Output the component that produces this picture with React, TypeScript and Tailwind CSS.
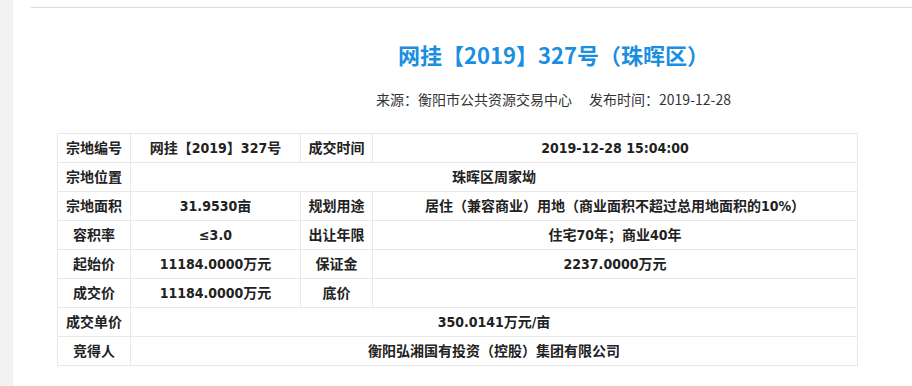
const rows: { cells: { text: string; span?: number }[] }[] = [
  { cells: [{ text: '宗地编号' }, { text: '网挂【2019】327号' }, { text: '成交时间' }, { text: '2019-12-28 15:04:00' }] },
  { cells: [{ text: '宗地位置' }, { text: '珠晖区周家坳', span: 3 }] },
  { cells: [{ text: '宗地面积' }, { text: '31.9530亩' }, { text: '规划用途' }, { text: '居住（兼容商业）用地（商业面积不超过总用地面积的10%）' }] },
  { cells: [{ text: '容积率' }, { text: '≤3.0' }, { text: '出让年限' }, { text: '住宅70年；商业40年' }] },
  { cells: [{ text: '起始价' }, { text: '11184.0000万元' }, { text: '保证金' }, { text: '2237.0000万元' }] },
  { cells: [{ text: '成交价' }, { text: '11184.0000万元' }, { text: '底价' }, { text: '' }] },
  { cells: [{ text: '成交单价' }, { text: '350.0141万元/亩', span: 3 }] },
  { cells: [{ text: '竞得人' }, { text: '衡阳弘湘国有投资（控股）集团有限公司', span: 3 }] },
];

export default function App() {
  return (
    <div
      className="flex w-[912px] h-[386px] bg-white overflow-hidden"
      style={{ fontFamily: '"Noto Sans CJK SC", "Noto Sans", sans-serif' }}
    >
      <div className="w-[13px] shrink-0 bg-[#f2f2f2]" />
      <div className="flex-1 flex flex-col">
        {/* top rule */}
        <div className="mt-[7px] ml-[18px] border-t border-[#dcdcdc]" />

        <div className="pl-[182px] mt-[31px] text-center">
          <h1 className="text-[22px] leading-[30px] font-bold text-[#1a8ee1]">网挂【2019】327号（珠晖区）</h1>
          <p className="mt-[20px] text-[14px] leading-[20px] text-[#333]">
            来源：衡阳市公共资源交易中心<span className="inline-block w-[17px]" />发布时间：2019-12-28
          </p>
        </div>

        <table className="mt-[24px] ml-[44px] w-[800px] border-collapse table-fixed border-r border-b border-r-[#a0a0a0] border-b-[#a0a0a0] text-[14px] font-bold text-[#222] font-['DejaVu_Sans_Condensed','Noto_Sans_CJK_SC',sans-serif]">
          <colgroup>
            <col className="w-[73px]" />
            <col className="w-[170px]" />
            <col className="w-[72px]" />
            <col className="w-[485px]" />
          </colgroup>
          <tbody>
            {rows.map((row, i) => (
              <tr key={i} className="h-[29px]">
                {row.cells.map((c, j) => (
                  <td
                    key={j}
                    colSpan={c.span}
                    className="border border-[#e8e8e8] text-center align-middle p-0 leading-[28px] whitespace-nowrap"
                  >
                    {c.text}
                  </td>
                ))}
              </tr>
            ))}
          </tbody>
        </table>
      </div>
    </div>
  );
}
